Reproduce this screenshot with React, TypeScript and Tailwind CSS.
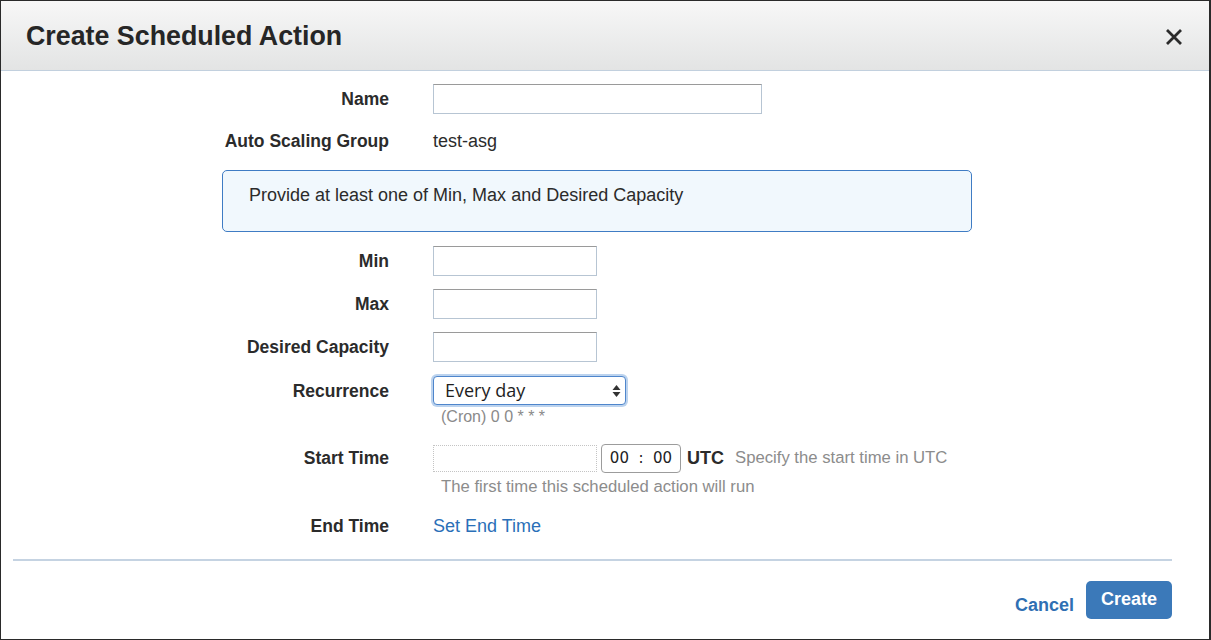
import React from "react";

const font = { fontFamily: '"Liberation Sans", Arial, Helvetica, sans-serif' };

function Label({ children }: { children: React.ReactNode }) {
  return (
    <div className="w-[388px] shrink-0 text-right font-bold text-[17.5px] leading-[22px] text-[#2b2b2b]">
      {children}
    </div>
  );
}

function TextBox({ w }: { w: string }) {
  return (
    <div className={`${w} h-[30px] border border-[#b7c5d3] border-t-[#9a9a9a] bg-white`} />
  );
}

export default function App() {
  return (
    <div
      className="w-[1211px] h-[640px] bg-white border-l border-t border-b border-r-2 border-[#2a2a2a] flex flex-col overflow-hidden"
      style={font}
    >
      {/* Header */}
      <div className="h-[70px] shrink-0 flex items-center justify-between pl-[25px] pr-[26px] bg-gradient-to-b from-[#f7f7f7] to-[#e3e4e4] border-b border-[#c2d0de]">
        <div className="text-[26.8px] font-bold text-[#262626] leading-[32px]">
          Create Scheduled Action
        </div>
        <svg width="18" height="18" viewBox="0 0 18 18" className="mt-[2px]">
          <path d="M2 2 L16 16 M16 2 L2 16" stroke="#2b2b2b" strokeWidth="2.8" strokeLinecap="butt" />
        </svg>
      </div>

      {/* Body */}
      <div className="flex flex-col text-[18px] text-[#2b2b2b]">
        <div className="flex items-center mt-[13px] h-[30px] gap-[44px]">
          <Label>Name</Label>
          <TextBox w="w-[329px]" />
        </div>
        <div className="flex items-center mt-[13px] h-[28px] gap-[44px]">
          <Label>Auto Scaling Group</Label>
          <div className="leading-[22px]">test-asg</div>
        </div>
        <div className="ml-[221px] mt-[15px] w-[750px] h-[62px] rounded-[5px] border border-[#3f7cc4] bg-[#f1f8fd] pl-[26px] pt-[13px] text-[18px] leading-[22px]">
          Provide at least one of Min, Max and Desired Capacity
        </div>
        <div className="flex items-center mt-[14px] h-[30px] gap-[44px]">
          <Label>Min</Label>
          <TextBox w="w-[164px]" />
        </div>
        <div className="flex items-center mt-[13px] h-[30px] gap-[44px]">
          <Label>Max</Label>
          <TextBox w="w-[164px]" />
        </div>
        <div className="flex items-center mt-[13px] h-[30px] gap-[44px]">
          <Label>Desired Capacity</Label>
          <TextBox w="w-[164px]" />
        </div>
        <div className="flex items-center mt-[14px] h-[29px] gap-[44px]">
          <Label>Recurrence</Label>
          <div className="w-[193px] h-[29px] rounded-[4px] border border-[#4f86cc] shadow-[0_0_0_2px_#bcd3ee] bg-white flex items-center justify-between pl-[11px] pr-[4px]">
            <span className="text-[18px] leading-[22px] text-[#1e1e1e] -mt-[1px]" style={{ fontFamily: '"Open Sans", "Liberation Sans", sans-serif' }}>
              Every day
            </span>
            <svg width="9" height="14" viewBox="0 0 9 14">
              <path d="M4.5 1 L8.5 6 H0.5 Z" fill="#333" />
              <path d="M4.5 13 L8.5 8 H0.5 Z" fill="#333" />
            </svg>
          </div>
        </div>
        <div className="ml-[440px] mt-[2px] h-[20px] leading-[20px] text-[16px] text-[#8a8a8a]">(Cron) 0 0 * * *</div>
        <div className="flex items-center mt-[16px] h-[30px] gap-[44px]">
          <Label>Start Time</Label>
          <div className="flex items-center">
            <div className="w-[164px] h-[27px] border border-[#c4c4c4] border-dotted bg-white" />
            <div className="ml-[4px] w-[80px] h-[29px] rounded-[4px] border border-[#9c9c9c] flex items-center justify-center text-[15px] text-[#222] whitespace-pre" style={{ fontFamily: '"DejaVu Sans", sans-serif' }}>
              {"00  :  00"}
            </div>
            <span className="ml-[6px] font-bold text-[18px] text-[#2b2b2b]">UTC</span>
            <span className="ml-[11px] text-[16.7px] text-[#8c8c8c]">Specify the start time in UTC</span>
          </div>
        </div>
        <div className="ml-[440px] mt-[4px] h-[20px] leading-[20px] text-[16.7px] text-[#8c8c8c]">The first time this scheduled action will run</div>
        <div className="flex items-center mt-[17px] h-[24px] gap-[44px]">
          <Label>End Time</Label>
          <span className="text-[#2a6fb8] text-[18px] leading-[22px]">Set End Time</span>
        </div>
      </div>

      <div className="ml-[12px] mr-[37px] mt-[21px] h-[2px] bg-[#c5d3e2]" />

      <div className="flex items-center justify-end pr-[37px] mt-[20px] gap-[12px]">
        <span className="text-[#2f6fb3] font-bold text-[18px] mt-[10px]">Cancel</span>
        <div className="w-[86px] h-[38px] rounded-[5px] bg-[#3b79b9] text-white font-bold text-[18px] flex items-center justify-center pb-[1px]">
          Create
        </div>
      </div>
    </div>
  );
}
